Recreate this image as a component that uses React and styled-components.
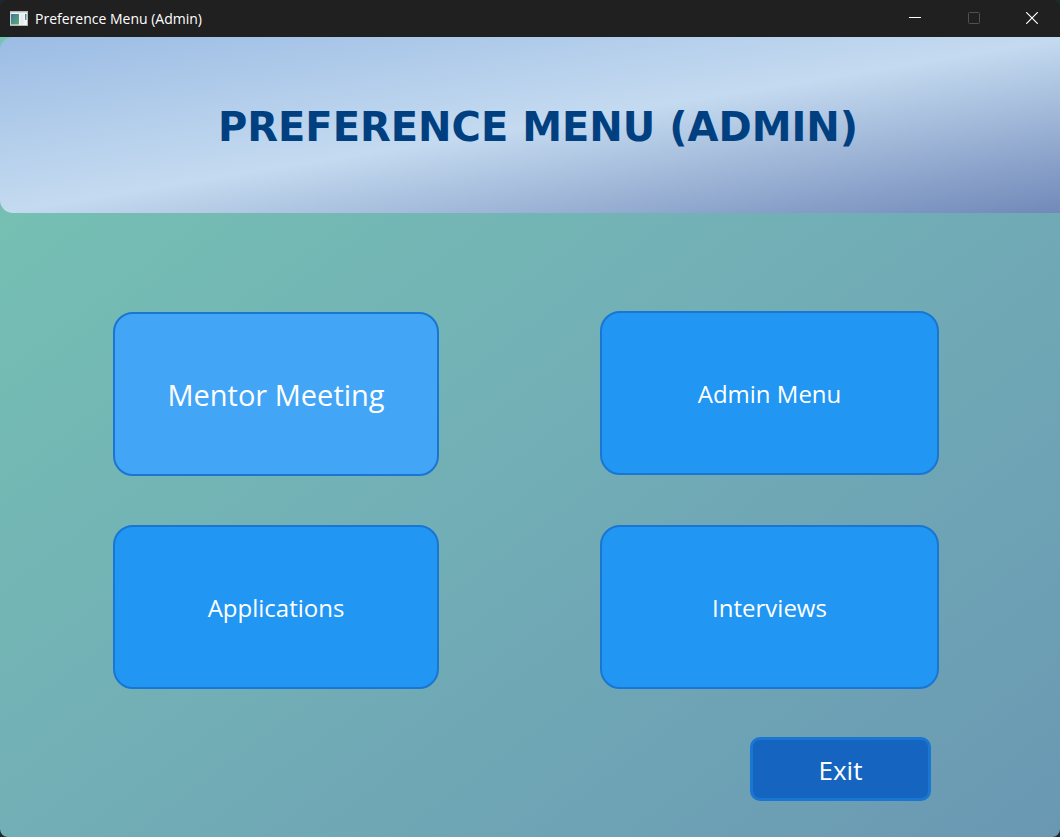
import React from "react";
import styled, { createGlobalStyle } from "styled-components";

const GlobalStyle = createGlobalStyle`
  * { box-sizing: border-box; }
  body {
    margin: 0;
    background: #1c2a30;
    font-family: "Segoe UI", "Open Sans", "Noto Sans", sans-serif;
  }
`;

const Window = styled.div`
  display: flex;
  flex-direction: column;
  min-height: 100vh;
  border-radius: 8px;
  overflow: hidden;
`;

const TitleBar = styled.header`
  display: flex;
  align-items: center;
  height: 37px;
  padding-left: 9px;
  background: #202020;
  color: #ffffff;
`;

const AppIcon = styled.svg`
  width: 19px;
  height: 16px;
  margin-right: 7px;
  margin-bottom: 2px;
`;

const WindowTitle = styled.span`
  flex: 1;
  font-size: 14px;
  line-height: 20px;
`;

const WindowButton = styled.button`
  display: flex;
  align-items: center;
  justify-content: center;
  width: ${({ $width }) => $width};
  height: 36px;
  padding: 0 0 2px;
  border: 0;
  background: transparent;
  color: #ffffff;

  &:disabled { color: #505050; }
`;

const Content = styled.main`
  flex: 1;
  overflow: hidden;
  background: linear-gradient(to bottom right, #76c4b2, #72afb6 50%, #6a98b3);
`;

const Banner = styled.div`
  display: flex;
  align-items: center;
  justify-content: center;
  height: 176px;
  margin-right: -16px;
  padding-top: 4px;
  border-radius: 13px;
  background: linear-gradient(to bottom right, #9bbce4, #c4daf0 50%, #6f88b8);
`;

const Heading = styled.h1`
  margin: 0;
  color: #004080;
  font: bold 40px/48px Verdana, "DejaVu Sans", sans-serif;
  white-space: nowrap;
`;

const Menu = styled.nav`
  display: grid;
  grid-template-columns: 326fr 339fr;
  grid-template-rows: 165px 164px;
  gap: 49px 161px;
  padding: 98px 121px 0 113px;
`;

const MenuButton = styled.button`
  align-self: ${({ $active }) => ($active ? "end" : "start")};
  height: 164px;
  padding: 2px 0 0;
  border: 2px solid #1976d2;
  border-radius: 20px;
  background: ${({ $active }) => ($active ? "#42a5f5" : "#2196f3")};
  color: #ffffff;
  font-family: inherit;
  font-size: ${({ $active }) => ($active ? "29px" : "24px")};
  line-height: 36px;
`;

const Footer = styled.footer`
  display: flex;
  justify-content: flex-end;
  padding: 48px 129px 36px;
`;

const ExitButton = styled.button`
  width: 181px;
  height: 64px;
  padding: 2px 0 0;
  border: 3px solid #1976d2;
  border-radius: 10px;
  background: #1565c0;
  color: #ffffff;
  font-family: inherit;
  font-size: 26px;
  line-height: 36px;
`;

export default function App() {
  return (
    <>
      <GlobalStyle />
      <Window>
        <TitleBar>
          <AppIcon viewBox="0 0 19 16" aria-hidden="true">
            <defs>
              <linearGradient id="pane" x1="0" y1="0" x2="1" y2="1">
                <stop offset="0" stopColor="#3e74a5" />
                <stop offset="1" stopColor="#5fb06c" />
              </linearGradient>
            </defs>
            <rect x="1" y="1" width="18" height="15" fill="#b5b8bb" />
            <rect x="1.5" y="2.5" width="16.5" height="12.5" fill="#f4f5f7" />
            <rect x="2" y="4" width="8" height="10.5" fill="url(#pane)" />
            <rect x="11.5" y="4" width="3" height="10.5" fill="#e6e9f0" />
            <rect x="16" y="4" width="1.5" height="6" fill="url(#pane)" />
          </AppIcon>
          <WindowTitle>Preference Menu (Admin)</WindowTitle>
          <WindowButton type="button" aria-label="Minimize" $width="58px">
            <svg width="12" height="12" viewBox="0 0 12 12" stroke="currentColor" shapeRendering="crispEdges">
              <path d="M0 5.5H12" />
            </svg>
          </WindowButton>
          <WindowButton type="button" aria-label="Maximize" disabled $width="60px">
            <svg width="12" height="12" viewBox="0 0 12 12" fill="none" stroke="currentColor">
              <rect x="0.5" y="0.5" width="11" height="11" rx="1" />
            </svg>
          </WindowButton>
          <WindowButton type="button" aria-label="Close" $width="56px">
            <svg width="12" height="12" viewBox="0 0 12 12" stroke="currentColor" strokeWidth="1.2">
              <path d="M0.2 0.2L11.8 11.8M11.8 0.2L0.2 11.8" />
            </svg>
          </WindowButton>
        </TitleBar>
        <Content>
          <Banner>
            <Heading>PREFERENCE MENU (ADMIN)</Heading>
          </Banner>
          <Menu>
            <MenuButton type="button" $active>Mentor Meeting</MenuButton>
            <MenuButton type="button">Admin Menu</MenuButton>
            <MenuButton type="button">Applications</MenuButton>
            <MenuButton type="button">Interviews</MenuButton>
          </Menu>
          <Footer>
            <ExitButton type="button">Exit</ExitButton>
          </Footer>
        </Content>
      </Window>
    </>
  );
}
